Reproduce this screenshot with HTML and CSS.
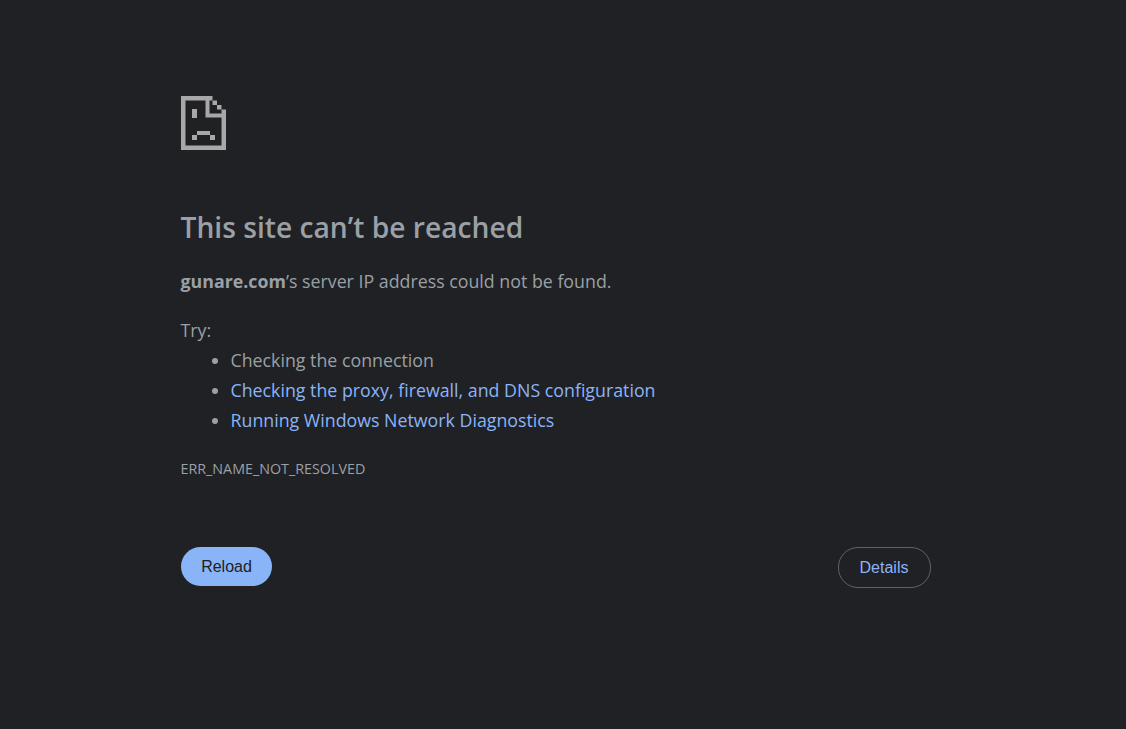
FILE: index.html
```html
<!DOCTYPE html>
<html lang="en">
<head>
    <meta charset="UTF-8">
    <title>gunare.com</title>
    <link rel="stylesheet" href="styles.css">
</head>
<body>
    <div class="container">
        <!-- sad page icon -->
        <svg class="error-icon" viewBox="0 0 45 54" width="45" height="54">
            <path fill="#a8a8a8" d="M0 0H31.500V4.500H36V9H40.500V13.500H45V54H0ZM4.500 4.500V49.500H40.500V21.500H24.500V4.500ZM28.500 4.500V17.500H40.500V13.500H36V9H31.500V4.500Z"/>
            <path fill="#a8a8a8" d="M11 13H16V22H11ZM16 35H29V39H16ZM11 39H16V44H11ZM29 39H34V44H29Z"/>
        </svg>

        <h1>This site can’t be reached</h1>
        <p class="summary"><strong>gunare.com</strong>’s server IP address could not be found.</p>

        <div class="suggestions">
            <p>Try:</p>
            <ul>
                <li>Checking the connection</li>
                <li><a href="#">Checking the proxy, firewall, and DNS configuration</a></li>
                <li><a href="#">Running Windows Network Diagnostics</a></li>
            </ul>
        </div>

        <div class="error-code">ERR_NAME_NOT_RESOLVED</div>

        <div class="buttons">
            <button class="reload">Reload</button>
            <button class="details">Details</button>
        </div>
    </div>
</body>
</html>
```

FILE: styles.css
```css
* {
    margin: 0;
    padding: 0;
    box-sizing: border-box;
}

body {
    background-color: #202124;
    color: #9aa0a6;
    font-family: "Open Sans", "Noto Sans", Arial, sans-serif;
    font-size: 17.8px;
}

.container {
    width: 750px;
    margin-left: 180.500px;
    padding-top: 96px;
}

.error-icon {
    display: block;
    margin-left: 0.500px;
}

h1 {
    margin-top: 59px;
    font-size: 28.200px;
    font-weight: 600;
    line-height: 36px;
    color: #9aa0a6;
}

.summary {
    margin-top: 21px;
    line-height: 30px;
}

.summary strong {
    font-weight: 700;
}

.suggestions {
    margin-top: 19px;
    line-height: 30px;
}

.suggestions ul {
    padding-left: 50px;
}

a {
    color: #8ab4f8;
    text-decoration: none;
}

.error-code {
    margin-top: 24px;
    font-size: 14.300px;
    line-height: 20px;
}

.buttons {
    display: flex;
    justify-content: space-between;
    align-items: flex-start;
    margin-top: 68px;
    margin-left: 0.500px;
}

button {
    font-family: "Liberation Sans", Arial, sans-serif;
    font-size: 16px;
    border-radius: 20px;
}

.reload {
    width: 91px;
    height: 39px;
    border: none;
    background-color: #8ab4f8;
    color: #202124;
}

.details {
    width: 93px;
    height: 41px;
    border: 1px solid #5f6368;
    background-color: transparent;
    color: #8ab4f8;
}
```
